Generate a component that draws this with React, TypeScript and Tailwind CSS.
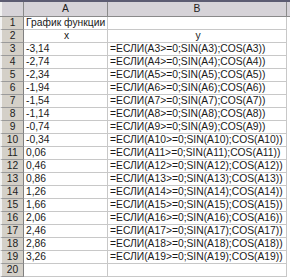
const xs = ["-3,14", "-2,74", "-2,34", "-1,94", "-1,54", "-1,14", "-0,74", "-0,34", "0,06", "0,46", "0,86", "1,26", "1,66", "2,06", "2,46", "2,86", "3,26"];

function RowHead({ n }: { n: number }) {
  return (
    <div className="w-[24px] shrink-0 border-l-2 border-l-[#f2f2f2] border-r border-r-[#808080] border-b border-b-[#9a9a9a] bg-[#d4d0c8] text-center text-[#222] leading-[12px]">
      {n}
    </div>
  );
}

function Row({ n, a, b, center }: { n: number; a?: string; b?: string; center?: boolean }) {
  return (
    <div className="flex h-[13px]">
      <RowHead n={n} />
      <div className={`w-[84px] shrink-0 border-r border-b border-[#c8c8c8] pl-[2px] leading-[12px] whitespace-nowrap ${center ? "text-center" : ""}`}>
        {a}
      </div>
      <div className={`w-[179px] shrink-0 border-r border-b border-[#c8c8c8] pl-[2px] leading-[12px] whitespace-nowrap ${center ? "text-center" : ""}`}>
        {b}
      </div>
    </div>
  );
}

export default function App() {
  return (
    <div className="w-[290px] h-[277px] overflow-hidden bg-white text-[10.3px] text-[#1a1a1a]" style={{ fontFamily: '"Liberation Sans", Arial, sans-serif' }}>
      <div className="flex h-[17px] border-t-2 border-t-[#5c5c72] border-b border-b-[#8a8a8a] bg-[#d6d3d8]">
        <div className="w-[24px] shrink-0 border-l-2 border-l-[#f2f2f2] border-r border-r-[#8a8a8a]" />
        <div className="w-[84px] shrink-0 border-r border-r-[#8a8a8a] text-center leading-[14px] text-[#222]">A</div>
        <div className="w-[179px] shrink-0 border-r border-r-[#8a8a8a] text-center leading-[14px] text-[#222]">B</div>
      </div>
      <Row n={1} a="График функции" />
      <Row n={2} a="x" b="y" center />
      {xs.map((x, i) => {
        const r = i + 3;
        return <Row key={r} n={r} a={x} b={`=ЕСЛИ(A${r}>=0;SIN(A${r});COS(A${r}))`} />;
      })}
      <Row n={20} />
    </div>
  );
}
